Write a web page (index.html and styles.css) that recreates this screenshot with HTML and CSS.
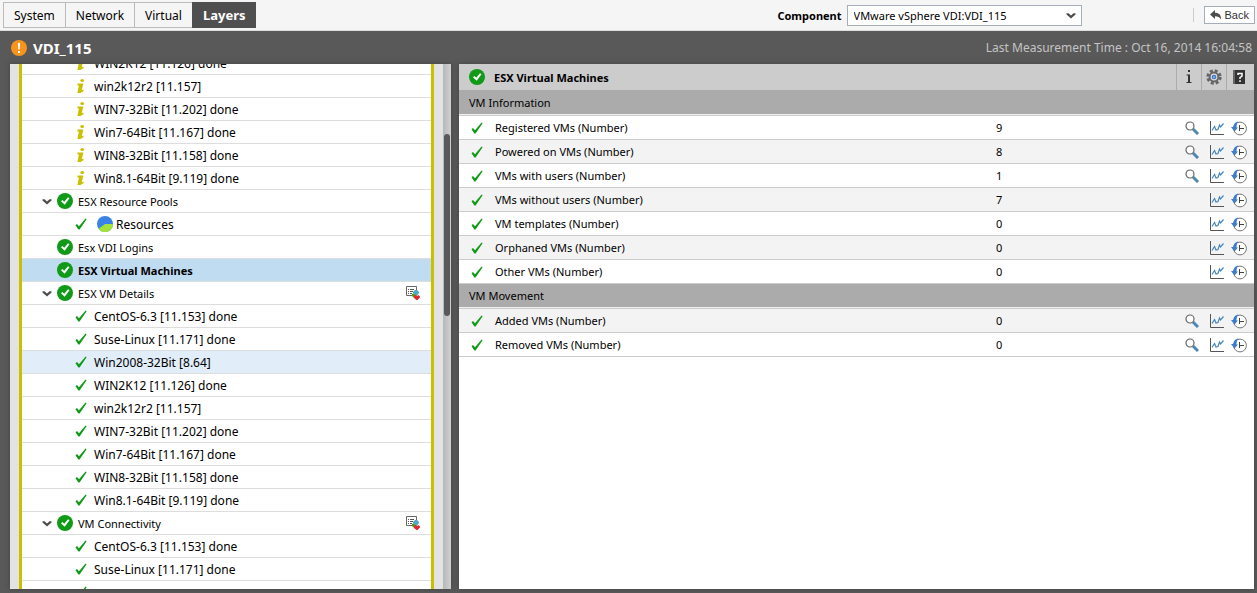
FILE: index.html
```html
<!DOCTYPE html>
<html lang="en">
<head>
    <meta charset="UTF-8">
    <meta name="viewport" content="width=device-width, initial-scale=1.0">
    <title>VDI_115 - Layers</title>
    <link rel="stylesheet" href="styles.css">
</head>
<body>

<!-- shared icons -->
<svg class="sprite" aria-hidden="true">
    <symbol id="ok" viewBox="0 0 16 16">
        <circle cx="8" cy="8" r="8" fill="#109a18"/>
        <path d="M4 8.2l1.4-1.2 1.8 1.7L11 4.2l1.5 1-4.8 6.5z" fill="#fff"/>
    </symbol>
    <symbol id="check" viewBox="0 0 12 12">
        <path d="M0.5 7.2L2 6l2 2.2L10.6 0.6l1 .7L4.6 11.6H3.4z" fill="#109a18"/>
    </symbol>
    <symbol id="info" viewBox="0 0 8 14">
        <ellipse cx="5.2" cy="1.6" rx="1.9" ry="1.5" fill="#c9c100"/>
        <path d="M.5 4.600H6.400L4.700 11.200l1.800-.6v1.700L3.400 13.900H.4L1.900 6.600H.4z" fill="#c9c100"/>
    </symbol>
    <symbol id="arrow" viewBox="0 0 10 7">
        <path d="M0.5 1.2h2L5 3.4l2.5-2.2h2v1.4L5 6.6 0.5 2.6z" fill="#4d4d4d"/>
    </symbol>
    <symbol id="layout" viewBox="0 0 14 14">
        <path d="M.5.5h10v9H.5z" fill="#fff" stroke="#666"/>
        <path d="M2 3.500h1M4 3.500h4M2 5.500h1M4 5.500h3M2 7.500h1M4 7.500h2" stroke="#555"/>
        <path d="M9 4h2l2 2v1l-1.500 2h-3L7 7V6z" fill="#4fa9c4"/>
        <path d="M6 8l2-.5 1.500 2L8.500 11.500H7.500L6 10z" fill="#4d9a1c"/>
        <path d="M8 10.500L9.500 9l1.500 1 1.500-1L14 10.500v1L11.500 14h-1L8 12z" fill="#df2b33"/>
    </symbol>
    <symbol id="zoom" viewBox="0 0 14 14">
        <path d="M8 8l5 5" stroke="#4a88b8" stroke-width="3"/>
        <circle cx="5" cy="5" r="4" fill="#fff" stroke="#666" stroke-width="1.200"/>
    </symbol>
    <symbol id="graph" viewBox="0 0 15 14">
        <path d="M.5 0v13.500H14" fill="none" stroke="#555"/>
        <path d="M2 9.500l2.500-4 1.500 3.500 2-.500L9.500 4l1 2 3-3.500" fill="none" stroke="#4586bd" stroke-width="1.200"/>
    </symbol>
    <symbol id="history" viewBox="0 0 16 15">
        <circle cx="9" cy="7.500" r="6.400" fill="#fff" stroke="#777"/>
        <path d="M8.500 4v6M8 7.500h5" stroke="#444"/>
        <path d="M7.500.5C4 1 2.500 3.500 2.300 6H0l3.500 4.500L7 6.500H5.500C5.500 4 6 2 7.500.5z" fill="#3d7ccc"/>
    </symbol>
</svg>

<header class="topbar">
    <nav class="tabs">
        <a href="#">System</a>
        <a href="#">Network</a>
        <a href="#">Virtual</a>
        <a href="#" class="active">Layers</a>
    </nav>
    <div class="component">
        <label for="component">Component</label>
        <div class="select-box">
            <select id="component">
                <option>VMware vSphere VDI:VDI_115</option>
            </select>
            <svg class="arrow"><use href="#arrow"/></svg>
        </div>
    </div>
    <span class="divider"></span>
    <button class="back">
        <svg viewBox="0 0 12 10"><path d="M0 4.500L5 0v2.700c4 0 6 2 6 6.800C9.500 7 8 6.300 5 6.300V9z" fill="#4d4d4d"/></svg>
        Back
    </button>
</header>

<div class="titlebar">
    <svg class="warn" viewBox="0 0 16 16">
        <circle cx="8" cy="8" r="8" fill="#f7941d"/>
        <path d="M6.900 3h2.200l-.4 6.500H7.300zM7 11h2v2H7z" fill="#fff"/>
    </svg>
    <h1>VDI_115</h1>
    <span class="measured">Last Measurement Time : Oct 16, 2014 16:04:58</span>
</div>

<main class="panels">
    <section class="tree-panel">
        <div class="tree-view">
            <ul class="tree">
                <li class="child"><svg class="info"><use href="#info"/></svg><a href="#">WIN2K12 [11.126] done</a></li>
                <li class="child"><svg class="info"><use href="#info"/></svg><a href="#">win2k12r2 [11.157]</a></li>
                <li class="child"><svg class="info"><use href="#info"/></svg><a href="#">WIN7-32Bit [11.202] done</a></li>
                <li class="child"><svg class="info"><use href="#info"/></svg><a href="#">Win7-64Bit [11.167] done</a></li>
                <li class="child"><svg class="info"><use href="#info"/></svg><a href="#">WIN8-32Bit [11.158] done</a></li>
                <li class="child"><svg class="info"><use href="#info"/></svg><a href="#">Win8.1-64Bit [9.119] done</a></li>
                <li><button class="toggle" aria-label="Collapse"><svg class="arrow"><use href="#arrow"/></svg></button><svg class="ok"><use href="#ok"/></svg><a href="#">ESX Resource Pools</a></li>
                <li class="child"><svg class="check"><use href="#check"/></svg>
                    <svg class="pie" viewBox="0 0 16 16">
                        <circle cx="8" cy="8" r="8" fill="#3b82e6"/>
                        <path d="M8 8h8A8 8 0 0 1 1.500 12.700z" fill="#a4e33a"/>
                    </svg>
                    <a href="#">Resources</a></li>
                <li><span class="toggle"></span><svg class="ok"><use href="#ok"/></svg><a href="#">Esx VDI Logins</a></li>
                <li class="selected"><span class="toggle"></span><svg class="ok"><use href="#ok"/></svg><a href="#">ESX Virtual Machines</a></li>
                <li><button class="toggle" aria-label="Collapse"><svg class="arrow"><use href="#arrow"/></svg></button><svg class="ok"><use href="#ok"/></svg><a href="#">ESX VM Details</a><svg class="layout"><use href="#layout"/></svg></li>
                <li class="child"><svg class="check"><use href="#check"/></svg><a href="#">CentOS-6.3 [11.153] done</a></li>
                <li class="child"><svg class="check"><use href="#check"/></svg><a href="#">Suse-Linux [11.171] done</a></li>
                <li class="child hovered"><svg class="check"><use href="#check"/></svg><a href="#">Win2008-32Bit [8.64]</a></li>
                <li class="child"><svg class="check"><use href="#check"/></svg><a href="#">WIN2K12 [11.126] done</a></li>
                <li class="child"><svg class="check"><use href="#check"/></svg><a href="#">win2k12r2 [11.157]</a></li>
                <li class="child"><svg class="check"><use href="#check"/></svg><a href="#">WIN7-32Bit [11.202] done</a></li>
                <li class="child"><svg class="check"><use href="#check"/></svg><a href="#">Win7-64Bit [11.167] done</a></li>
                <li class="child"><svg class="check"><use href="#check"/></svg><a href="#">WIN8-32Bit [11.158] done</a></li>
                <li class="child"><svg class="check"><use href="#check"/></svg><a href="#">Win8.1-64Bit [9.119] done</a></li>
                <li><button class="toggle" aria-label="Collapse"><svg class="arrow"><use href="#arrow"/></svg></button><svg class="ok"><use href="#ok"/></svg><a href="#">VM Connectivity</a><svg class="layout"><use href="#layout"/></svg></li>
                <li class="child"><svg class="check"><use href="#check"/></svg><a href="#">CentOS-6.3 [11.153] done</a></li>
                <li class="child"><svg class="check"><use href="#check"/></svg><a href="#">Suse-Linux [11.171] done</a></li>
                <li class="child"><svg class="check"><use href="#check"/></svg></li>
            </ul>
        </div>
        <div class="scroll-track"><div class="scroll-thumb"></div></div>
    </section>

    <section class="detail-panel">
        <div class="detail-head">
            <svg class="ok"><use href="#ok"/></svg>
            <h2>ESX Virtual Machines</h2>
            <button aria-label="Information">
                <svg viewBox="0 0 16 16"><path d="M7 1h2v2H7zM5.500 5.500H9V13h1.500v1h-5v-1H7V6.500H5.500z" fill="#333"/></svg>
            </button>
            <button aria-label="Settings">
                <svg viewBox="0 0 16 16">
                    <circle cx="8" cy="8" r="6.200" fill="none" stroke="#666" stroke-width="3" stroke-dasharray="2.900 1.970"/>
                    <circle cx="8" cy="8" r="4.400" fill="#ddd" stroke="#666" stroke-width="2"/>
                    <circle cx="8" cy="8" r="1.600" fill="#ccc" stroke="#3b7dd0" stroke-width="1.500"/>
                </svg>
            </button>
            <button aria-label="Help">
                <svg viewBox="0 0 16 16">
                    <path d="M2 1h12v14H2z" fill="#333"/>
                    <path d="M2 1h2v14H2z" fill="#666"/>
                    <path d="M7 6V4.500h4V7L9 8.500V10M9 11.200V13" fill="none" stroke="#fff" stroke-width="1.500"/>
                </svg>
            </button>
        </div>

        <h3>VM Information</h3>
        <table>
            <tr><td class="state"><svg class="check"><use href="#check"/></svg></td><td>Registered VMs (Number)</td><td class="value">9</td><td class="tools"><div><svg class="zoom"><use href="#zoom"/></svg><svg class="graph"><use href="#graph"/></svg><svg class="history"><use href="#history"/></svg></div></td></tr>
            <tr class="alt"><td class="state"><svg class="check"><use href="#check"/></svg></td><td>Powered on VMs (Number)</td><td class="value">8</td><td class="tools"><div><svg class="zoom"><use href="#zoom"/></svg><svg class="graph"><use href="#graph"/></svg><svg class="history"><use href="#history"/></svg></div></td></tr>
            <tr><td class="state"><svg class="check"><use href="#check"/></svg></td><td>VMs with users (Number)</td><td class="value">1</td><td class="tools"><div><svg class="zoom"><use href="#zoom"/></svg><svg class="graph"><use href="#graph"/></svg><svg class="history"><use href="#history"/></svg></div></td></tr>
            <tr class="alt"><td class="state"><svg class="check"><use href="#check"/></svg></td><td>VMs without users (Number)</td><td class="value">7</td><td class="tools"><div><svg class="graph"><use href="#graph"/></svg><svg class="history"><use href="#history"/></svg></div></td></tr>
            <tr><td class="state"><svg class="check"><use href="#check"/></svg></td><td>VM templates (Number)</td><td class="value">0</td><td class="tools"><div><svg class="graph"><use href="#graph"/></svg><svg class="history"><use href="#history"/></svg></div></td></tr>
            <tr class="alt"><td class="state"><svg class="check"><use href="#check"/></svg></td><td>Orphaned VMs (Number)</td><td class="value">0</td><td class="tools"><div><svg class="graph"><use href="#graph"/></svg><svg class="history"><use href="#history"/></svg></div></td></tr>
            <tr><td class="state"><svg class="check"><use href="#check"/></svg></td><td>Other VMs (Number)</td><td class="value">0</td><td class="tools"><div><svg class="graph"><use href="#graph"/></svg><svg class="history"><use href="#history"/></svg></div></td></tr>
        </table>

        <h3>VM Movement</h3>
        <table>
            <tr class="alt"><td class="state"><svg class="check"><use href="#check"/></svg></td><td>Added VMs (Number)</td><td class="value">0</td><td class="tools"><div><svg class="zoom"><use href="#zoom"/></svg><svg class="graph"><use href="#graph"/></svg><svg class="history"><use href="#history"/></svg></div></td></tr>
            <tr><td class="state"><svg class="check"><use href="#check"/></svg></td><td>Removed VMs (Number)</td><td class="value">0</td><td class="tools"><div><svg class="zoom"><use href="#zoom"/></svg><svg class="graph"><use href="#graph"/></svg><svg class="history"><use href="#history"/></svg></div></td></tr>
        </table>
    </section>
</main>

</body>
</html>
```

FILE: styles.css
```css
* {
    box-sizing: border-box;
}
body {
    display: flex;
    flex-direction: column;
    height: 100vh;
    margin: 0;
    background: #595959;
    color: #000;
    font-family: "Noto Sans", "Open Sans", sans-serif;
    font-size: 11px;
    overflow: hidden;
}
a {
    color: inherit;
    text-decoration: none;
}
button {
    padding: 0;
    border: none;
    background: none;
    font: inherit;
    cursor: pointer;
}
h1, h2, h3 {
    margin: 0;
}
svg {
    display: block;
    flex: none;
}
.sprite {
    display: none;
}

/* icon sizes */
.ok, .pie, .warn {
    width: 16px;
    height: 16px;
}
.check {
    width: 12px;
    height: 12px;
}
.info {
    width: 8px;
    height: 14px;
}
.arrow {
    width: 10px;
    height: 7px;
}
.layout, .zoom {
    width: 14px;
    height: 14px;
}
.graph {
    width: 15px;
    height: 14px;
}
.history {
    width: 16px;
    height: 15px;
}

/* top bar */
.topbar {
    display: flex;
    flex: none;
    align-items: center;
    height: 31px;
    padding: 0 2px 0 3px;
    background: #f5f5f5;
    border-bottom: 1px solid #ddd;
}
.tabs {
    display: flex;
    height: 26px;
    border: 1px solid #bbb;
    font-size: 12px;
    line-height: 26px;
}
.tabs a {
    padding: 0 10px;
    border-right: 1px solid #bbb;
}
.tabs .active {
    margin: -1px;
    padding: 0 11px;
    border: none;
    background: #4f4f4f;
    color: #fff;
    font-size: 13px;
    font-weight: bold;
}
.component {
    display: flex;
    align-items: center;
    gap: 5px;
    margin-left: auto;
}
.component label {
    font-weight: bold;
}
.select-box {
    position: relative;
}
.select-box select {
    width: 235px;
    height: 21px;
    padding: 0 6px;
    border: 1px solid #a5adba;
    border-radius: 0;
    background: #fff;
    color: #000;
    font: inherit;
    appearance: none;
}
.select-box .arrow {
    position: absolute;
    top: 7px;
    right: 6px;
    pointer-events: none;
}
.divider {
    width: 1px;
    height: 14px;
    margin: 0 10px 0 111px;
    background: #ccc;
}
.back {
    display: flex;
    align-items: center;
    gap: 3px;
    height: 18px;
    padding: 0 5px;
    border: 1px solid #a5adba;
    background: #fff;
    color: #333;
    font-family: "Liberation Sans", Arial, sans-serif;
    font-size: 11px;
}
.back svg {
    width: 12px;
    height: 10px;
}

/* title */
.titlebar {
    display: flex;
    flex: none;
    align-items: center;
    gap: 6px;
    height: 33px;
    padding: 0 5px 0 11px;
    color: #fff;
}
.titlebar h1 {
    font-size: 15px;
}
.measured {
    margin-left: auto;
    color: #c4c4c4;
    font-size: 12px;
}

.panels {
    display: flex;
    flex: 1;
    gap: 8px;
    min-height: 0;
    padding: 0 3px 4px 10px;
}

/* layer tree */
.tree-panel {
    display: flex;
    flex: 0 0 441px;
    background: #e3e3e3;
    box-shadow: 0 0 5px #444;
}
.tree-view {
    flex: 1;
    margin: 0 9px;
    background: #fff;
    border: solid #c9c100;
    border-width: 0 3px;
    overflow: hidden;
}
/* list is scrolled down by half a row */
.tree {
    margin: -12px 0 0;
    padding: 0;
    list-style: none;
}
.tree li {
    display: flex;
    align-items: center;
    gap: 5px;
    height: 23px;
    padding: 0 11px 0 20px;
    border-bottom: 1px solid #ddd;
}
.tree .child {
    padding-left: 53px;
    gap: 7px;
    font-size: 12px;
}
.tree .child .info {
    margin: 0 2px;
}
.tree .child .pie {
    margin: 0 -4px 0 3px;
}
.tree .selected {
    background: #c0dcf0;
    font-weight: bold;
}
.tree .hovered {
    background: #e1edf8;
}
.tree .layout {
    margin-left: auto;
}
.toggle {
    width: 10px;
}
.scroll-track {
    width: 8px;
    padding: 70px 1px 0;
    background: linear-gradient(to right, #b8b8b8, #d0d0d0);
}
.scroll-thumb {
    height: 182px;
    border-radius: 3px;
    background: #595959;
}

/* measures */
.detail-panel {
    flex: 1;
    background: #fff;
    box-shadow: 0 0 5px #444;
}
.detail-head {
    display: flex;
    align-items: center;
    height: 27px;
    padding-left: 10px;
    background: #ccc;
    border-bottom: 1px solid #ababab;
}
.detail-head h2 {
    flex: 1;
    padding-left: 9px;
    font-size: 11px;
}
.detail-head button {
    display: flex;
    align-items: center;
    justify-content: center;
    width: 25px;
    height: 100%;
    border-left: 1px solid #ababab;
}
.detail-head button:last-child {
    width: 28px;
    padding-right: 3px;
}
.detail-head button svg {
    width: 16px;
    height: 16px;
}
h3 {
    height: 25px;
    padding-left: 10px;
    background: #ababab;
    border-bottom: 1px solid #ccc;
    box-shadow: inset 0 -1px #f0f0f0;
    font-size: 11px;
    font-weight: normal;
    line-height: 23px;
}
table {
    width: 100%;
    border-spacing: 0;
}
td {
    height: 24px;
    padding: 0;
    border-bottom: 1px solid #ccc;
}
.alt {
    background: #f3f3f3;
}
.state {
    width: 36px;
    padding-left: 12px;
}
.value {
    width: 188px;
}
.tools {
    width: 70px;
    padding-right: 7px;
}
.tools div {
    display: flex;
    justify-content: flex-end;
    gap: 6px;
    padding-top: 1px;
}
.tools .zoom {
    margin-right: 5px;
}
```
